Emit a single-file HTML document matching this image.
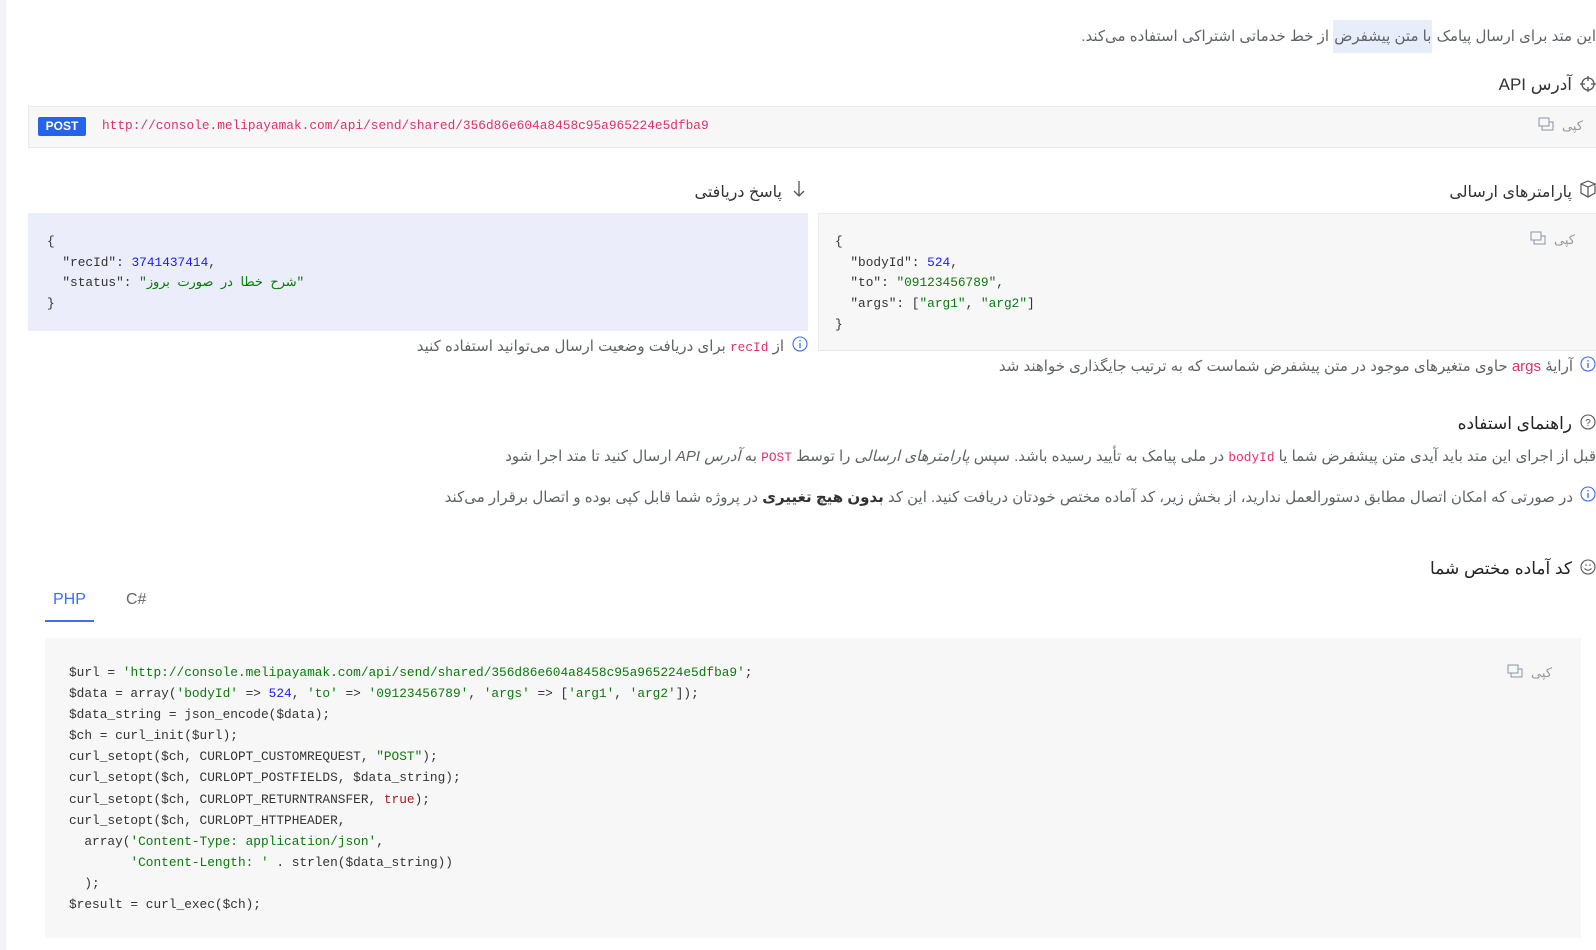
<!DOCTYPE html>
<html><head><meta charset="utf-8"><style>
*{margin:0;padding:0;box-sizing:border-box}
body{width:1596px;height:950px;overflow:hidden;background:#fff;position:relative;font-family:"Liberation Sans","DejaVu Sans",sans-serif;color:#555}
.a{position:absolute;white-space:nowrap}
.r{direction:rtl;text-align:right}
.t{font-size:15px;color:#5f6368;line-height:20px}
.h{font-size:16px;color:#333;line-height:24px}
.mono{font-family:"Liberation Mono",monospace;font-size:12.8px;color:#333;white-space:pre}
.g{color:#0a7a0a}.b{color:#1a1aff}.p{color:#e0306a}.red{color:#b0161a}
.box{position:absolute;background:#f7f7f7;border:1px solid #e9e9e9}
.copy{position:absolute;font-size:13px;color:#999;direction:rtl}
svg{position:absolute}
</style></head><body>
<div class="a" style="left:0;top:0;width:6px;height:950px;background:#f1f3f6"></div>
<div class="a r t" style="right:0;top:27px">این متد برای ارسال پیامک <span style="background:#e8edfb;padding:8px 1px">با متن پیشفرض</span> از خط خدماتی اشتراکی استفاده می‌کند.</div>

<svg style="left:1580px;top:75px" width="16" height="18" viewBox="0 0 16 18"><circle cx="8" cy="9" r="6" fill="none" stroke="#555" stroke-width="1.3"/><path d="M8 1v5M8 12v5M0 9h5M11 9h5" stroke="#555" stroke-width="1.3"/></svg>
<div class="a r h" style="right:24px;top:73px;font-size:17px">آدرس API</div>

<div class="box" style="left:28px;top:106px;width:1580px;height:42px"></div>
<div class="a" style="left:38px;top:117px;width:48px;height:19px;background:#2563eb;border-radius:2px;color:#fff;font-size:12px;font-weight:bold;text-align:center;line-height:19px">POST</div>
<div class="a mono p" style="left:102px;top:118px;font-size:12.8px">http://console.melipayamak.com/api/send/shared/356d86e604a8458c95a965224e5dfba9</div>
<svg style="left:1538px;top:117px" width="16" height="14"><rect x="1" y="1" width="10" height="8" fill="none" stroke="#8a94a6"/><path d="M4 9v4h11V5h-4" fill="none" stroke="#8a94a6"/></svg>
<div class="copy" style="left:1562px;top:118px">کپی</div>

<svg style="left:1580px;top:180px" width="16" height="18" viewBox="0 0 16 18"><path d="M8 1l7 3v9l-7 4-7-4V4z M1 4l7 3 7-3 M8 7v10" fill="none" stroke="#555" stroke-width="1.2"/></svg>
<div class="a r h" style="right:24px;top:181px">پارامترهای ارسالی</div>
<svg style="left:792px;top:180px" width="14" height="18"><path d="M7 1v15M2 11l5 5 5-5" fill="none" stroke="#555" stroke-width="1.3"/></svg>
<div class="a r h" style="right:814px;top:181px">پاسخ دریافتی</div>

<div class="a" style="left:28px;top:213px;width:780px;height:118px;background:#ebedfa"></div>
<div class="a mono" style="left:47px;top:232px;line-height:20.7px">{
  "recId": <span class="b">3741437414</span>,
  "status": <span class="g">"شرح خطا در صورت بروز"</span>
}</div>

<div class="box" style="left:818px;top:213px;width:790px;height:138px"></div>
<div class="a mono" style="left:835px;top:232px;line-height:20.7px">{
  "bodyId": <span class="b">524</span>,
  "to": <span class="g">"09123456789"</span>,
  "args": [<span class="g">"arg1"</span>, <span class="g">"arg2"</span>]
}</div>
<svg style="left:1530px;top:231px" width="16" height="14"><rect x="1" y="1" width="10" height="8" fill="none" stroke="#8a94a6"/><path d="M4 9v4h11V5h-4" fill="none" stroke="#8a94a6"/></svg>
<div class="copy" style="left:1554px;top:232px">کپی</div>

<svg style="left:792px;top:336px" width="16" height="16"><circle cx="8" cy="8" r="7" fill="none" stroke="#3b6cf5" stroke-width="1.1"/><path d="M8 7v5M8 4v1.5" stroke="#3b6cf5" stroke-width="1.3"/></svg>
<div class="a r t" style="right:812px;top:337px">از <span class="mono p" style="font-size:12.8px">recId</span> برای دریافت وضعیت ارسال می‌توانید استفاده کنید</div>
<svg style="left:1580px;top:356px" width="16" height="16"><circle cx="8" cy="8" r="7" fill="none" stroke="#3b6cf5" stroke-width="1.1"/><path d="M8 7v5M8 4v1.5" stroke="#3b6cf5" stroke-width="1.3"/></svg>
<div class="a r t" style="right:23px;top:357px">آرایهٔ <span class="p">args</span> حاوی متغیرهای موجود در متن پیشفرض شماست که به ترتیب جایگذاری خواهند شد</div>

<svg style="left:1580px;top:413px" width="16" height="18"><circle cx="8" cy="9" r="7" fill="none" stroke="#555" stroke-width="1.1"/><text x="8" y="13" font-size="10" text-anchor="middle" fill="#555" font-family="Liberation Sans">?</text></svg>
<div class="a r h" style="right:24px;top:412px;color:#222;font-size:17px">راهنمای استفاده</div>
<div class="a r t" style="right:0;top:447px">قبل از اجرای این متد باید آیدی متن پیشفرض شما یا <span class="mono p">bodyId</span> در ملی پیامک به تأیید رسیده باشد. سپس <i>پارامترهای ارسالی</i> را توسط <span class="mono p">POST</span> به <i>آدرس API</i> ارسال کنید تا متد اجرا شود</div>
<svg style="left:1580px;top:486px" width="16" height="16"><circle cx="8" cy="8" r="7" fill="none" stroke="#3b6cf5" stroke-width="1.1"/><path d="M8 7v5M8 4v1.5" stroke="#3b6cf5" stroke-width="1.3"/></svg>
<div class="a r t" style="right:23px;top:488px">در صورتی که امکان اتصال مطابق دستورالعمل ندارید، از بخش زیر، کد آماده مختص خودتان دریافت کنید. این کد <b style="color:#333">بدون هیچ تغییری</b> در پروژه شما قابل کپی بوده و اتصال برقرار می‌کند</div>

<svg style="left:1580px;top:558px" width="16" height="18"><circle cx="8" cy="9" r="7" fill="none" stroke="#555" stroke-width="1.1"/><path d="M4.5 10.5q3.5 3.5 7 0" fill="none" stroke="#555"/><circle cx="6" cy="7" r=".8" fill="#555"/><circle cx="10" cy="7" r=".8" fill="#555"/></svg>
<div class="a r h" style="right:24px;top:557px;color:#222;font-size:17px">کد آماده مختص شما</div>

<div class="a" style="left:53px;top:591px;font-size:16px;color:#3a6ff7">PHP</div>
<div class="a" style="left:45px;top:620px;width:49px;height:2px;background:#3a6ff7"></div>
<div class="a" style="left:126px;top:591px;font-size:16px;color:#666">C#</div>

<div class="a" style="left:45px;top:638px;width:1536px;height:300px;background:#f7f7f7"></div>
<div class="a mono" style="left:69px;top:662px;line-height:21.1px">$url = <span class="g">'http://console.melipayamak.com/api/send/shared/356d86e604a8458c95a965224e5dfba9'</span>;
$data = array(<span class="g">'bodyId'</span> => <span class="b">524</span>, <span class="g">'to'</span> => <span class="g">'09123456789'</span>, <span class="g">'args'</span> => [<span class="g">'arg1'</span>, <span class="g">'arg2'</span>]);
$data_string = json_encode($data);
$ch = curl_init($url);
curl_setopt($ch, CURLOPT_CUSTOMREQUEST, <span class="g">"POST"</span>);
curl_setopt($ch, CURLOPT_POSTFIELDS, $data_string);
curl_setopt($ch, CURLOPT_RETURNTRANSFER, <span class="red">true</span>);
curl_setopt($ch, CURLOPT_HTTPHEADER,
  array(<span class="g">'Content-Type: application/json'</span>,
        <span class="g">'Content-Length: '</span> . strlen($data_string))
  );
$result = curl_exec($ch);</div>
<svg style="left:1507px;top:664px" width="16" height="14"><rect x="1" y="1" width="10" height="8" fill="none" stroke="#8a94a6"/><path d="M4 9v4h11V5h-4" fill="none" stroke="#8a94a6"/></svg>
<div class="copy" style="left:1531px;top:665px">کپی</div>
</body></html>
